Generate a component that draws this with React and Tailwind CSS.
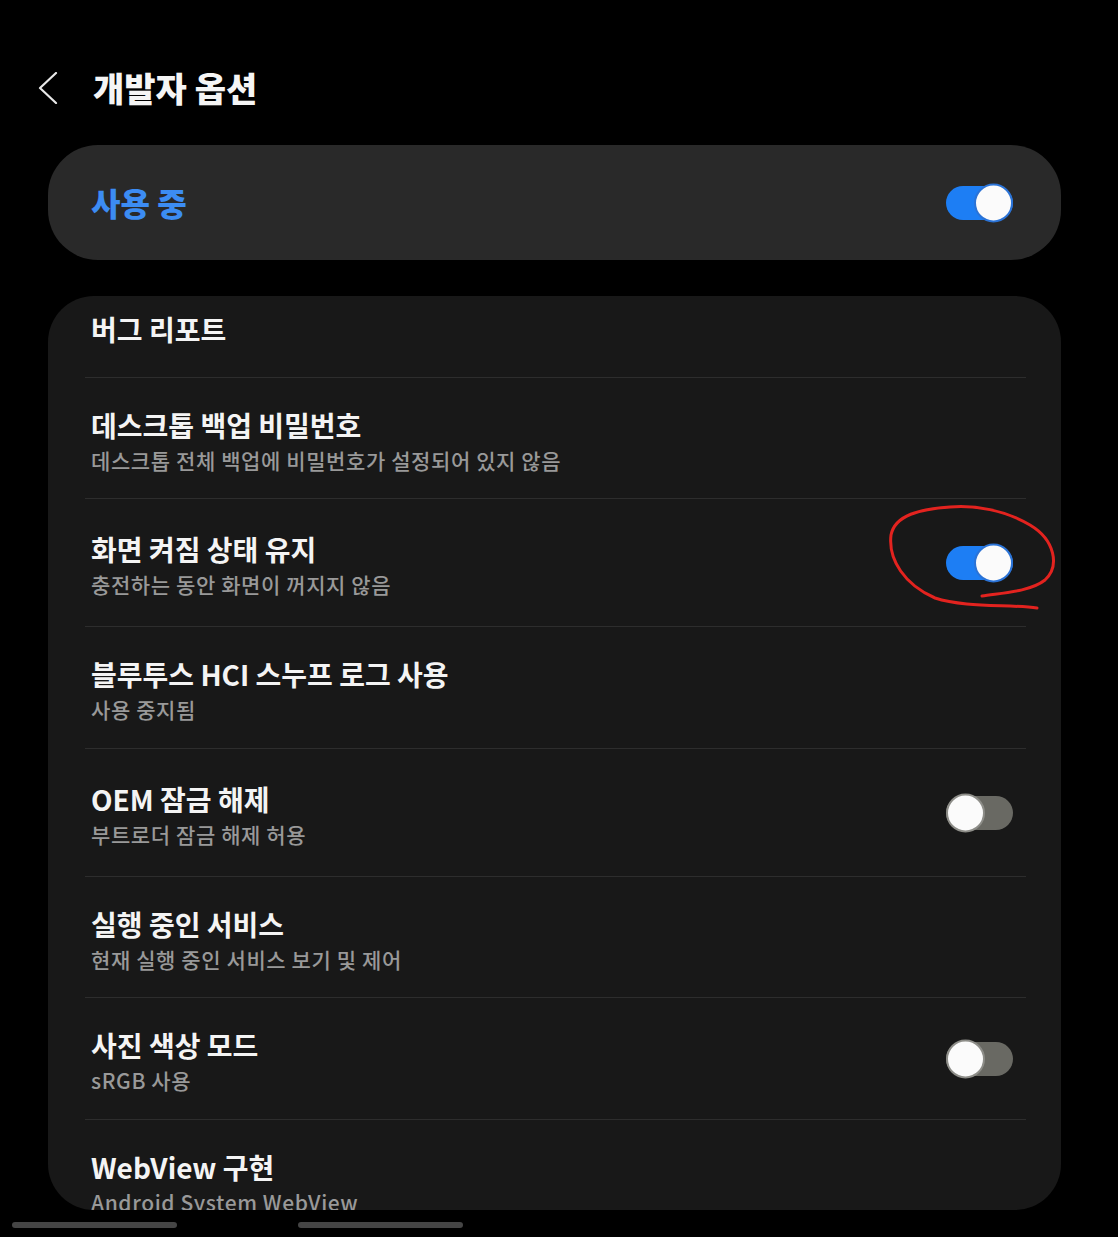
const rows = [
  { title: '버그 리포트', h: 'h-[82px]', single: true },
  { title: '데스크톱 백업 비밀번호', sub: '데스크톱 전체 백업에 비밀번호가 설정되어 있지 않음', h: 'h-[121px]' },
  { title: '화면 켜짐 상태 유지', sub: '충전하는 동안 화면이 꺼지지 않음', h: 'h-[128px]', toggle: true, on: true },
  { title: '블루투스 HCI 스누프 로그 사용', sub: '사용 중지됨', h: 'h-[122px]' },
  { title: 'OEM 잠금 해제', sub: '부트로더 잠금 해제 허용', h: 'h-[128px]', toggle: true, on: false },
  { title: '실행 중인 서비스', sub: '현재 실행 중인 서비스 보기 및 제어', h: 'h-[121px]' },
  { title: '사진 색상 모드', sub: 'sRGB 사용', h: 'h-[122px]', toggle: true, on: false },
]

function Toggle({ on }) {
  return (
    <div className={`relative w-[67px] h-[34px] rounded-full ${on ? 'bg-[#1d7ef4]' : 'bg-[#696963]'}`}>
      <div
        className={`absolute top-1/2 -translate-y-1/2 w-[39px] h-[39px] rounded-full bg-[#fbfbfb] border-2 ${
          on ? 'right-0 border-[#2b73d6]' : 'left-0 border-[#8d8d88]'
        }`}
      />
    </div>
  )
}

function Row({ row }) {
  if (row.single) {
    return (
      <div className={`${row.h} flex items-center border-b border-[#2d2d2d]`}>
        <div className="pl-[6px] pb-[16px] text-[28px] leading-[36px] font-bold text-[#f4f4f4]">{row.title}</div>
      </div>
    )
  }
  return (
    <div className={`${row.h} flex items-center justify-between border-b border-[#2d2d2d] pr-[13px]`}>
      <div className="pl-[6px] pt-[7px]">
        <div className="text-[28px] leading-[36px] font-bold text-[#f4f4f4]">{row.title}</div>
        <div className="text-[21px] leading-[34px] tracking-[0.6px] font-medium text-[#999999]">{row.sub}</div>
      </div>
      {row.toggle ? <Toggle on={row.on} /> : null}
    </div>
  )
}

export default function App() {
  return (
    <div
      className="relative w-[1118px] h-[1237px] overflow-hidden bg-black"
      style={{ fontFamily: '"Noto Sans CJK KR", "Noto Sans", sans-serif' }}
    >
      {/* header */}
      <div className="h-[145px] pt-[31px] pl-[38px] flex items-center gap-[35px]">
        <svg width="20" height="32" viewBox="0 0 20 32" fill="none">
          <path d="M18 1 L2 16 L18 31" stroke="#e8e8e8" strokeWidth="2.2" strokeLinecap="round" strokeLinejoin="round" />
        </svg>
        <h1 className="text-[34px] leading-[40px] font-black text-[#f5f5f5]">개발자 옵션</h1>
      </div>

      {/* master switch */}
      <div className="ml-[48px] w-[1013px] h-[115px] rounded-[50px] bg-[#292929] flex items-center justify-between pl-[43px] pr-[48px]">
        <span className="text-[32px] leading-[38px] font-black text-[#3c8cf3] pb-[2px]">사용 중</span>
        <Toggle on />
      </div>

      {/* settings list */}
      <div className="mt-[36px] ml-[48px] w-[1013px] h-[914px] rounded-[46px] bg-[#181818] overflow-hidden px-[37px] pr-[35px]">
        {rows.map((row) => (
          <Row key={row.title} row={row} />
        ))}
        <div className="pl-[6px] pt-[29px]">
          <div className="text-[28px] leading-[36px] font-bold text-[#f4f4f4]">WebView 구현</div>
          <div className="text-[21px] leading-[34px] tracking-[0.6px] font-medium text-[#999999]">Android System WebView</div>
        </div>
      </div>

      {/* nav handles */}
      <div className="mt-[12px] flex">
        <div className="ml-[12px] w-[165px] h-[6px] rounded-full bg-[#454545]" />
        <div className="ml-[121px] w-[165px] h-[6px] rounded-full bg-[#454545]" />
      </div>

      {/* hand-drawn annotation */}
      <svg className="absolute left-[880px] top-[500px]" width="180" height="115" viewBox="0 0 180 115" fill="none">
        <path
          d="M102 96 C120 93 150 92 165 80 C180 66 175 40 150 25 C125 10 95 5 70 7 C40 9 15 15 11 35 C8 60 25 85 55 98 C85 108 130 104 157 108"
          stroke="#e3231f"
          strokeWidth="3"
          strokeLinecap="round"
          strokeLinejoin="round"
        />
      </svg>
    </div>
  )
}
